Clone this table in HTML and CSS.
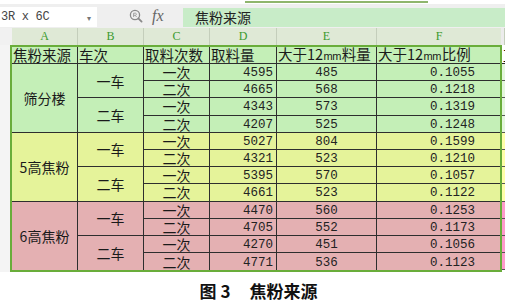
FILE: index.html
```html
<!DOCTYPE html>
<html lang="zh">
<head>
<meta charset="utf-8">
<link rel="stylesheet" href="styles.css">
</head>
<body>
<div class="page">
  <div class="shot">
    <div class="topline"><span class="progress"></span></div>
    <div class="toolbar">
      <div class="namebox"><span class="ref">3R x 6C</span><span class="caret">▾</span></div>
      <div class="tools">
        <svg class="zoomicon" width="14" height="14" viewBox="0 0 14 14">
          <circle cx="6" cy="6" r="4.6" fill="none" stroke="#8a8a8a" stroke-width="1.3"/>
          <path d="M9.3 9.3 L12.6 12.6" stroke="#8a8a8a" stroke-width="1.8" stroke-linecap="round"/>
          <path d="M4.6 8 V4.2 H6.6 A1.1 1.1 0 0 1 6.6 6.3 H4.6 M6.2 6.3 L7.6 8" fill="none" stroke="#9a9a9a" stroke-width="0.9"/>
        </svg>
        <span class="fx">fx</span>
      </div>
      <div class="formula">焦粉来源</div>
    </div>
    <div class="colhdr">
      <div class="corner"></div>
      <div class="col">A</div>
      <div class="col">B</div>
      <div class="col">C</div>
      <div class="col">D</div>
      <div class="col">E</div>
      <div class="col last">F</div>
      <div class="col gh"></div>
    </div>
    <div class="body">
      <div class="rownums"></div>
      <div class="grid">
        <div class="c hd"><span>焦粉来源</span></div>
        <div class="c hd"><span>车次</span></div>
        <div class="c hd"><span>取料次数</span></div>
        <div class="c hd"><span>取料量</span></div>
        <div class="c hd"><span>大于12<span class="mm">mm</span>料量</span></div>
        <div class="c hd lastcol"><span>大于12<span class="mm">mm</span>比例</span></div>

        <div class="c g span4">筛分楼</div>
        <div class="c g span2">一车</div>
        <div class="c g">一次</div><div class="c g num r">4595</div><div class="c g num">485</div><div class="c g num f lastcol">0.1055</div>
        <div class="c g">二次</div><div class="c g num r">4665</div><div class="c g num">568</div><div class="c g num f lastcol">0.1218</div>
        <div class="c g span2">二车</div>
        <div class="c g">一次</div><div class="c g num r">4343</div><div class="c g num">573</div><div class="c g num f lastcol">0.1319</div>
        <div class="c g">二次</div><div class="c g num r">4207</div><div class="c g num">525</div><div class="c g num f lastcol">0.1248</div>

        <div class="c y span4">5高焦粉</div>
        <div class="c y span2">一车</div>
        <div class="c y">一次</div><div class="c y num r">5027</div><div class="c y num">804</div><div class="c y num f lastcol">0.1599</div>
        <div class="c y">二次</div><div class="c y num r">4321</div><div class="c y num">523</div><div class="c y num f lastcol">0.1210</div>
        <div class="c y span2">二车</div>
        <div class="c y">一次</div><div class="c y num r">5395</div><div class="c y num">570</div><div class="c y num f lastcol">0.1057</div>
        <div class="c y">二次</div><div class="c y num r">4661</div><div class="c y num">523</div><div class="c y num f lastcol">0.1122</div>

        <div class="c p span4 lastrow">6高焦粉</div>
        <div class="c p span2">一车</div>
        <div class="c p">一次</div><div class="c p num r">4470</div><div class="c p num">560</div><div class="c p num f lastcol">0.1253</div>
        <div class="c p">二次</div><div class="c p num r">4705</div><div class="c p num">552</div><div class="c p num f lastcol">0.1173</div>
        <div class="c p span2 lastrow">二车</div>
        <div class="c p">一次</div><div class="c p num r">4270</div><div class="c p num">451</div><div class="c p num f lastcol">0.1056</div>
        <div class="c p lastrow">二次</div><div class="c p num r lastrow">4771</div><div class="c p num lastrow">536</div><div class="c p num f lastcol lastrow">0.1123</div>
      </div>
      <div class="gcol">
        <div class="gc ghd">直</div>
        <div class="gc gg"></div><div class="gc gg"></div><div class="gc gg"></div><div class="gc gg"></div>
        <div class="gc gy"></div><div class="gc gy"></div><div class="gc gy"></div><div class="gc gy"></div>
        <div class="gc gp"></div><div class="gc gp"></div><div class="gc gp"></div><div class="gc gp"></div>
      </div>
    </div>
  </div>
  <div class="caption"><span class="fig">图 3</span><span class="title">焦粉来源</span></div>
</div>
</body>
</html>
```

FILE: styles.css
```css
* { box-sizing: border-box; margin: 0; padding: 0; }
html, body { background: #ffffff; }
body { width: 517px; height: 307px; overflow: hidden; font-family: "Noto Sans CJK SC", sans-serif; }

.page { width: 517px; }
.shot { width: 505px; }

.topline { height: 4px; display: flex; align-items: flex-start; padding-top: 1px; background: #ffffff; }
.progress { display: block; margin-left: 245px; width: 183px; height: 2px; background: #8fb56d; }

.toolbar { height: 24px; display: flex; align-items: flex-start; background: #efefef; }
.namebox { width: 97px; height: 20px; margin-top: 3px; background: #ffffff; display: flex; align-items: center; justify-content: space-between; padding: 0 6px 0 1px; }
.ref { font-family: "Liberation Mono", monospace; font-size: 12px; color: #444; letter-spacing: -0.3px; }
.caret { font-size: 8px; color: #777; }
.tools { width: 86px; height: 24px; display: flex; align-items: center; padding-left: 32px; gap: 9px; }
.zoomicon { display: block; }
.fx { font-family: "Liberation Serif", serif; font-style: italic; font-size: 16px; color: #666; }
.formula { flex: 1; height: 19px; margin-top: 4px; background: #c8ecc8; font-size: 14px; line-height: 19px; padding-left: 12px; color: #222; }

.colhdr { height: 17px; display: grid; grid-template-columns: 12px 66px 66px 66px 67px 100px 124px 4px; background: #ffffff; }
.corner { background: #f1f1f1; }
.col { background: #dfe9d6; border-right: 1px solid #c4cebb; font-family: "Liberation Serif", serif; font-size: 12px; color: #3b9a2e; text-align: center; line-height: 17px; }
.col.last { border-right: none; }
.col.gh { background: #ececec; }

.body { display: flex; }
.rownums { width: 10px; height: 227px; background: #f4f4f4; }
.grid {
  display: grid;
  grid-template-columns: 66px 66px 66px 67px 100px 123px;
  grid-template-rows: 17px repeat(12, 17.2px);
  border: 2px solid #69ad3a;
}
.c {
  border-right: 1px solid #2e2e2e;
  border-bottom: 1px solid #2e2e2e;
  display: flex; align-items: center; justify-content: center;
  font-size: 14px; color: #1a1a1a; line-height: 16px; white-space: nowrap;
}
.c.lastcol { border-right: none; }
.c.lastrow { border-bottom: none; }
.c.hd { background: #c4efb7; justify-content: flex-start; padding-left: 1px; font-size: 14.5px; }
.mm { font-family: "Liberation Sans Narrow", "Liberation Sans", sans-serif; font-size: 11px; letter-spacing: -0.6px; margin: 0 1px 0 0.5px; }
.c.g { background: #c4efb7; }
.c.y { background: #e5f39a; }
.c.p { background: #e4b0b2; }
.span4 { grid-row: span 4; }
.span2 { grid-row: span 2; }
.num { font-family: "Liberation Mono", monospace; font-size: 12.5px; color: #222; padding-top: 2px; }
.num.r { justify-content: flex-end; padding-right: 3px; }
.num.f { padding-left: 28px; }

.gcol { width: 3px; padding-top: 2px; display: flex; flex-direction: column; }
.gc { height: 17.2px; border-bottom: 1px solid #555; overflow: hidden; }
.gc.ghd { height: 17px; background: #ffffff; font-size: 14px; line-height: 16px; text-indent: 1px; border-bottom: 1px solid #2e2e2e; }
.gc.gg { background: #e4f6dd; }
.gc.gy { background: #ffffa8; }
.gc.gp { background: #ff9acb; }

.caption { margin-top: 9px; display: flex; justify-content: center; gap: 19px; font-size: 17px; font-weight: 700; line-height: 20px; color: #111; }
```
